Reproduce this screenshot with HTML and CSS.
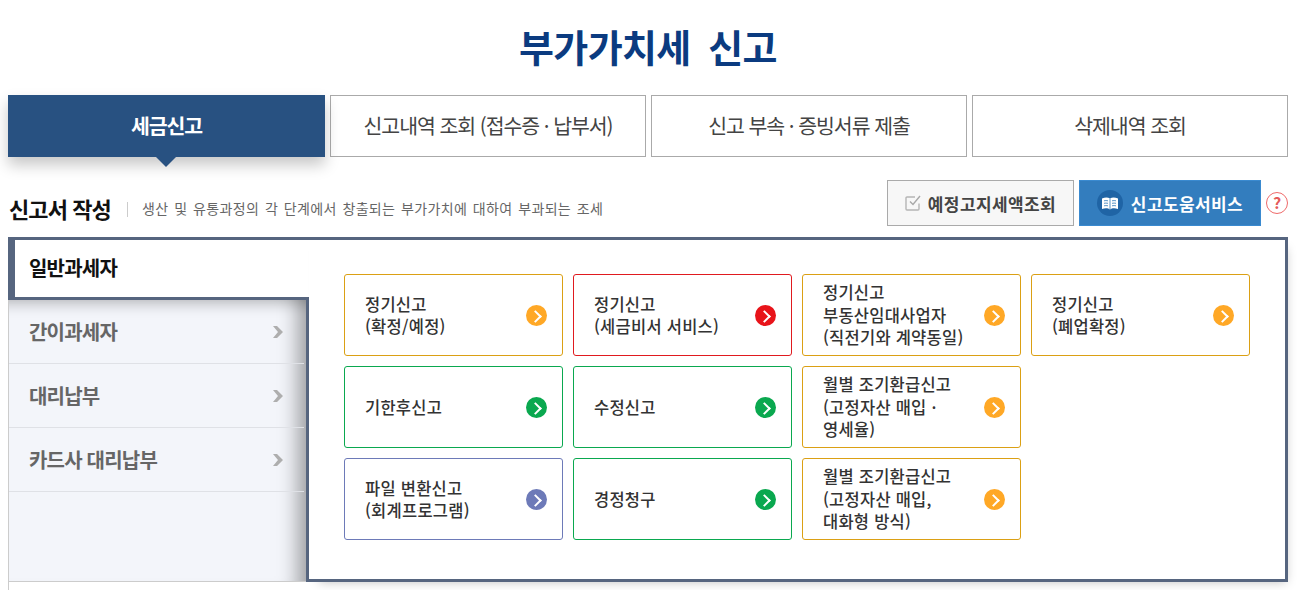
FILE: index.html
```html
<!DOCTYPE html>
<html lang="ko">
<head>
<meta charset="utf-8">
<title>부가가치세 신고</title>
<link rel="stylesheet" href="styles.css">
</head>
<body>
<h1 class="title">부가가치세 신고</h1>
<nav class="tabs">
  <a class="tab active">세금신고</a>
  <a class="tab">신고내역 조회 (접수증 · 납부서)</a>
  <a class="tab">신고 부속 · 증빙서류 제출</a>
  <a class="tab">삭제내역 조회</a>
</nav>
<div class="head">
  <h2 class="head-title">신고서 작성</h2>
  <p class="head-desc">생산 및 유통과정의 각 단계에서 창출되는 부가가치에 대하여 부과되는 조세</p>
  <div class="head-actions">
    <button class="btn btn-light">
      <svg viewBox="0 0 16 16" width="16" height="16"><path d="M14 8.500V14a1 1 0 0 1-1 1H2a1 1 0 0 1-1-1V3a1 1 0 0 1 1-1h8" fill="none" stroke="#b5b5b5" stroke-width="1.400"/><path d="M5 6.500l3 3L15 1" fill="none" stroke="#a8a8a8" stroke-width="1.400"/></svg>
      예정고지세액조회
    </button>
    <button class="btn btn-blue">
      <span class="book"><svg viewBox="0 0 16 13" width="16" height="13"><path d="M0 1.500C3 .2 6 .2 8 1.500 10 .2 13 .2 16 1.500V12C13 11 10 11 8 12.500 6 11 3 11 0 12z" fill="#fff"/><path d="M8 1.500v11M2 3.800c1.300-.3 2.500-.3 4 0M2 6.300c1.300-.3 2.500-.3 4 0M2 8.800c1.300-.3 2.500-.3 4 0M10 3.800c1.500-.3 2.700-.3 4 0M10 6.300c1.500-.3 2.700-.3 4 0M10 8.800c1.500-.3 2.700-.3 4 0" fill="none" stroke="#2f78b8" stroke-width=".8"/></svg></span>
      신고도움서비스
    </button>
    <span class="help">?</span>
  </div>
</div>
<section class="panel">
  <aside class="side">
    <div class="side-active">일반과세자</div>
    <ul class="side-list">
      <li class="side-item">간이과세자<svg class="chev" viewBox="0 0 10 12" width="10" height="12"><path d="M0 0h4l6 6-6 6H0l5-6z" fill="#aeaeae"/></svg></li>
      <li class="side-item">대리납부<svg class="chev" viewBox="0 0 10 12" width="10" height="12"><path d="M0 0h4l6 6-6 6H0l5-6z" fill="#aeaeae"/></svg></li>
      <li class="side-item">카드사 대리납부<svg class="chev" viewBox="0 0 10 12" width="10" height="12"><path d="M0 0h4l6 6-6 6H0l5-6z" fill="#aeaeae"/></svg></li>
    </ul>
  </aside>
  <div class="content">
    <a class="card c-orange"><span>정기신고<br>(확정/예정)</span><i class="go"></i></a>
    <a class="card c-red"><span>정기신고<br>(세금비서 서비스)</span><i class="go"></i></a>
    <a class="card c-orange"><span>정기신고<br>부동산임대사업자<br>(직전기와 계약동일)</span><i class="go"></i></a>
    <a class="card c-orange"><span>정기신고<br>(폐업확정)</span><i class="go"></i></a>
    <a class="card c-green"><span>기한후신고</span><i class="go"></i></a>
    <a class="card c-green"><span>수정신고</span><i class="go"></i></a>
    <a class="card c-orange"><span>월별 조기환급신고<br>(고정자산 매입 ·<br>영세율)</span><i class="go"></i></a>
    <a class="card c-blank"></a>
    <a class="card c-violet"><span>파일 변환신고<br>(회계프로그램)</span><i class="go"></i></a>
    <a class="card c-green"><span>경정청구</span><i class="go"></i></a>
    <a class="card c-orange"><span>월별 조기환급신고<br>(고정자산 매입,<br>대화형 방식)</span><i class="go"></i></a>
  </div>
</section>
<div class="panel-foot"></div>
</body>
</html>
```
FILE: styles.css
```css
* { box-sizing: border-box; }
html, body { margin: 0; padding: 0; }
body {
  width: 1298px;
  height: 590px;
  overflow: hidden;
  background: #fff;
  padding: 0 10px 0 8px;
  font-family: "Noto Sans CJK KR", "Noto Sans", sans-serif;
  color: #333;
}
.title {
  margin: 0;
  height: 95px;
  padding-top: 16px;
  text-align: center;
  font-size: 38px;
  line-height: 60px;
  font-weight: 700;
  letter-spacing: -.7px;
  word-spacing: 8px;
  color: #0b3b80;
}
.tabs { display: grid; grid-template-columns: 317px repeat(3, 316px); gap: 5px; height: 62px; }
.tab {
  display: flex;
  align-items: center;
  justify-content: center;
  padding-bottom: 2px;
  background: #fff;
  border: 1px solid #aaa;
  font-size: 20.500px;
  letter-spacing: -1.050px;
  color: #444;
}
.tab.active {
  position: relative;
  background: #285181;
  border: 0;
  color: #fff;
  font-weight: 700;
  box-shadow: 0 8px 14px rgba(0, 0, 0, .22);
}
.tab.active::after {
  content: "";
  position: absolute;
  left: 148px;
  bottom: -10px;
  border: 10px solid transparent;
  border-bottom: 0;
  border-top-color: #285181;
}
.head { display: flex; align-items: center; height: 80px; padding-top: 12px; }
.head-title {
  margin: 0;
  padding: 10px 0 0 1px;
  font-size: 22px;
  font-weight: 700;
  letter-spacing: -.9px;
  color: #111;
}
.head-desc {
  position: relative;
  margin: 0 0 0 16px;
  padding: 10px 0 0 15px;
  font-size: 14px;
  letter-spacing: .33px;
  word-spacing: 1.500px;
  color: #666;
}
.head-desc::before {
  content: "";
  position: absolute;
  left: 0;
  top: 14px;
  height: 15px;
  border-left: 1px solid #ccc;
}
.head-actions { margin-left: auto; display: flex; align-items: center; gap: 5px; }
.btn {
  display: flex;
  align-items: center;
  justify-content: center;
  height: 46px;
  padding: 0;
  font-family: inherit;
  font-size: 17px;
  font-weight: 700;
  letter-spacing: .4px;
}
.btn-light { width: 187px; gap: 7px; background: #f7f7f7; border: 1px solid #aaa; color: #444; }
.btn-blue { width: 182px; gap: 8px; background: #337dbe; border: 1px solid #3a8ad0; color: #fff; }
.book {
  width: 26px;
  height: 26px;
  border-radius: 50%;
  background: #1f64a5;
  display: flex;
  align-items: center;
  justify-content: center;
}
.help {
  width: 22px;
  height: 22px;
  border: 1.500px solid #ef6a6a;
  border-radius: 50%;
  color: #e45a5a;
  font-size: 16px;
  font-weight: 700;
  line-height: 19px;
  text-align: center;
}
.panel { display: flex; height: 345px; }
.side { width: 301px; flex: none; display: flex; flex-direction: column; }
.side-active {
  height: 63px;
  border: solid #56657f;
  border-width: 3px 0 3px 7px;
  padding: 13px 0 0 14px;
  font-size: 20px;
  line-height: 30px;
  font-weight: 700;
  letter-spacing: -.8px;
  color: #111;
  background: #fff;
}
.side-list {
  flex: 1;
  margin: 0;
  padding: 0;
  list-style: none;
  background: #f3f5fa;
  border-left: 1px solid #ccc;
  border-right: 3px solid #56657f;
  box-shadow: inset 0 -1px 0 #ccc, inset -26px 0 20px -18px rgba(0, 0, 0, .36), inset 0 20px 14px -16px rgba(0, 0, 0, .24);
}
.side-item {
  height: 64px;
  margin-right: 2px;
  padding: 0 21px 0 20px;
  display: flex;
  align-items: center;
  justify-content: space-between;
  border-bottom: 1px solid #dfe1e6;
  font-size: 20px;
  font-weight: 700;
  letter-spacing: -.8px;
  color: #666;
}
.content {
  flex: 1;
  height: 345px;
  border: solid #56657f;
  border-width: 3px 3px 3px 0;
  box-shadow: 4px 6px 10px -6px rgba(0, 0, 0, .25);
  padding: 34px 0 0 35px;
  display: grid;
  grid-template-columns: repeat(4, 219.200px);
  grid-auto-rows: 82px;
  column-gap: 9.800px;
  row-gap: 10px;
  align-content: start;
}
.card {
  display: flex;
  align-items: center;
  justify-content: space-between;
  padding: 0 15.500px 0 20px;
  border: 1px solid;
  border-radius: 3px;
  font-size: 16.500px;
  line-height: 22.500px;
  font-weight: 500;
  letter-spacing: .25px;
  color: #333;
}
.go {
  position: relative;
  flex: none;
  width: 21px;
  height: 21px;
  border-radius: 50%;
}
.go::after {
  content: "";
  position: absolute;
  left: 5px;
  top: 7px;
  width: 7px;
  height: 7px;
  border: solid #fff;
  border-width: 2px 2px 0 0;
  transform: rotate(45deg);
}
.c-orange { border-color: #dba014; }
.c-orange .go { background: #ffa826; }
.c-red { border-color: #e01a1f; }
.c-red .go { background: #e8141a; }
.c-green { border-color: #0aa84f; }
.c-green .go { background: #0aa84f; }
.c-violet { border-color: #6d7ab8; }
.c-violet .go { background: #6d7ab8; }
.c-blank { visibility: hidden; }
.panel-foot { height: 8px; border-left: 1px solid #ccc; }
```
